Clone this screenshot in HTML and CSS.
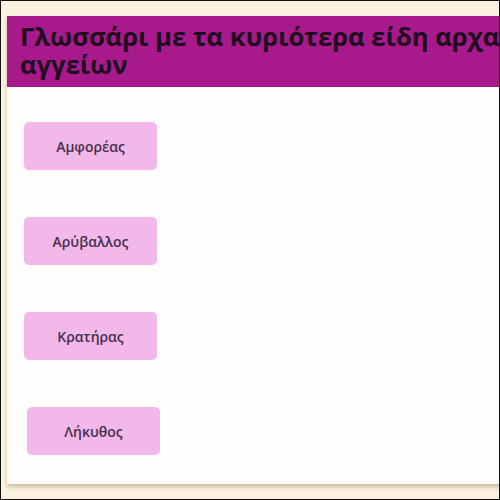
FILE: index.html
```html
<!DOCTYPE html>
<html lang="el">
<head>
  <meta charset="UTF-8">
  <meta name="viewport" content="width=device-width, initial-scale=1.0">
  <title>Γλωσσάρι αγγείων</title>
  <link rel="stylesheet" href="styles.css">
</head>
<body>
  <div class="page">
    <div class="card">
      <div class="card-header">
        <h1>Γλωσσάρι με τα κυριότερα είδη αρχαίων αγγείων</h1>
      </div>
      <div class="terms">
        <button class="term">Αμφορέας</button>
        <button class="term">Αρύβαλλος</button>
        <button class="term">Κρατήρας</button>
        <button class="term term-shift">Λήκυθος</button>
      </div>
    </div>
  </div>
</body>
</html>
```

FILE: styles.css
```css
html, body {
  margin: 0;
  height: 100%;
}
body {
  font-family: "Open Sans", "Noto Sans", sans-serif;
  background: #111;
  overflow: hidden;
}
.page {
  box-sizing: border-box;
  height: 498px;
  margin: 1px 0 0 1px;
  width: 498px;
  background: #fbf1de;
  padding: 15px 0 0 6px;
  overflow: hidden;
}
.card {
  width: 610px;
  height: 468px;
  background: #fffdfc;
  box-shadow: 0 3px 4px rgba(120, 100, 70, 0.35);
}
.card-header {
  background: #a8198b;
  padding: 7px 13px 8px;
}
.card-header h1 {
  margin: 0;
  font-size: 25.6px;
  line-height: 28px;
  font-weight: 700;
  color: #1d0a1c;
}
.terms {
  display: flex;
  flex-direction: column;
  align-items: flex-start;
  gap: 47px;
  padding: 35px 0 0 17px;
}
.term {
  width: 133px;
  height: 48px;
  border: none;
  border-radius: 5px;
  background: #f2b8ea;
  color: #45304b;
  font-family: inherit;
  font-size: 14px;
  font-weight: 600;
}
.term-shift {
  margin-left: 3px;
}
```
